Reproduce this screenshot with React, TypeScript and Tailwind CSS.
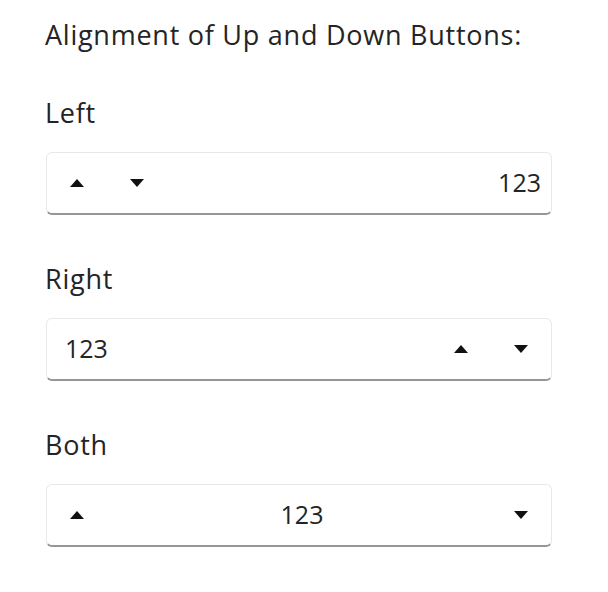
import React from "react";

const Up = () => (
  <svg width="14" height="8" viewBox="0 0 14 8" className="block">
    <polygon points="7,0 14,8 0,8" fill="#111" />
  </svg>
);

const Down = () => (
  <svg width="14" height="8" viewBox="0 0 14 8" className="block">
    <polygon points="0,0 14,0 7,8" fill="#111" />
  </svg>
);

const Btn = ({ children }: { children: React.ReactNode }) => (
  <button className="w-[60px] h-full flex items-center justify-center shrink-0">{children}</button>
);

const Box = ({ children }: { children: React.ReactNode }) => (
  <div className="w-[506px] h-[63px] flex items-center rounded-[6px] border border-[#e8e8e8] border-b-2 border-b-[#969696] bg-white">
    {children}
  </div>
);

const Label = ({ children }: { children: React.ReactNode }) => (
  <div className="h-[34px] leading-[34px] text-[27px] tracking-[0.75px] text-[#242424]">{children}</div>
);

export default function App() {
  return (
    <div
      className="min-h-[592px] w-[608px] bg-white pl-[45px] pt-[18px] text-[#242424]"
      style={{ fontFamily: '"Open Sans", sans-serif' }}
    >
      <Label>Alignment of Up and Down Buttons:</Label>

      <div className="mt-[44px]">
        <Label>Left</Label>
        <div className="mt-[22px] pl-[1px]">
          <Box>
            <Btn><Up /></Btn>
            <Btn><Down /></Btn>
            <div className="flex-1 text-right pr-[10px] text-[25px]">123</div>
          </Box>
        </div>
      </div>

      <div className="mt-[47px]">
        <Label>Right</Label>
        <div className="mt-[22px] pl-[1px]">
          <Box>
            <div className="flex-1 pl-[18px] text-[25px]">123</div>
            <Btn><Up /></Btn>
            <Btn><Down /></Btn>
          </Box>
        </div>
      </div>

      <div className="mt-[47px]">
        <Label>Both</Label>
        <div className="mt-[22px] pl-[1px]">
          <Box>
            <Btn><Up /></Btn>
            <div className="flex-1 text-center pl-[6px] text-[25px]">123</div>
            <Btn><Down /></Btn>
          </Box>
        </div>
      </div>
    </div>
  );
}
